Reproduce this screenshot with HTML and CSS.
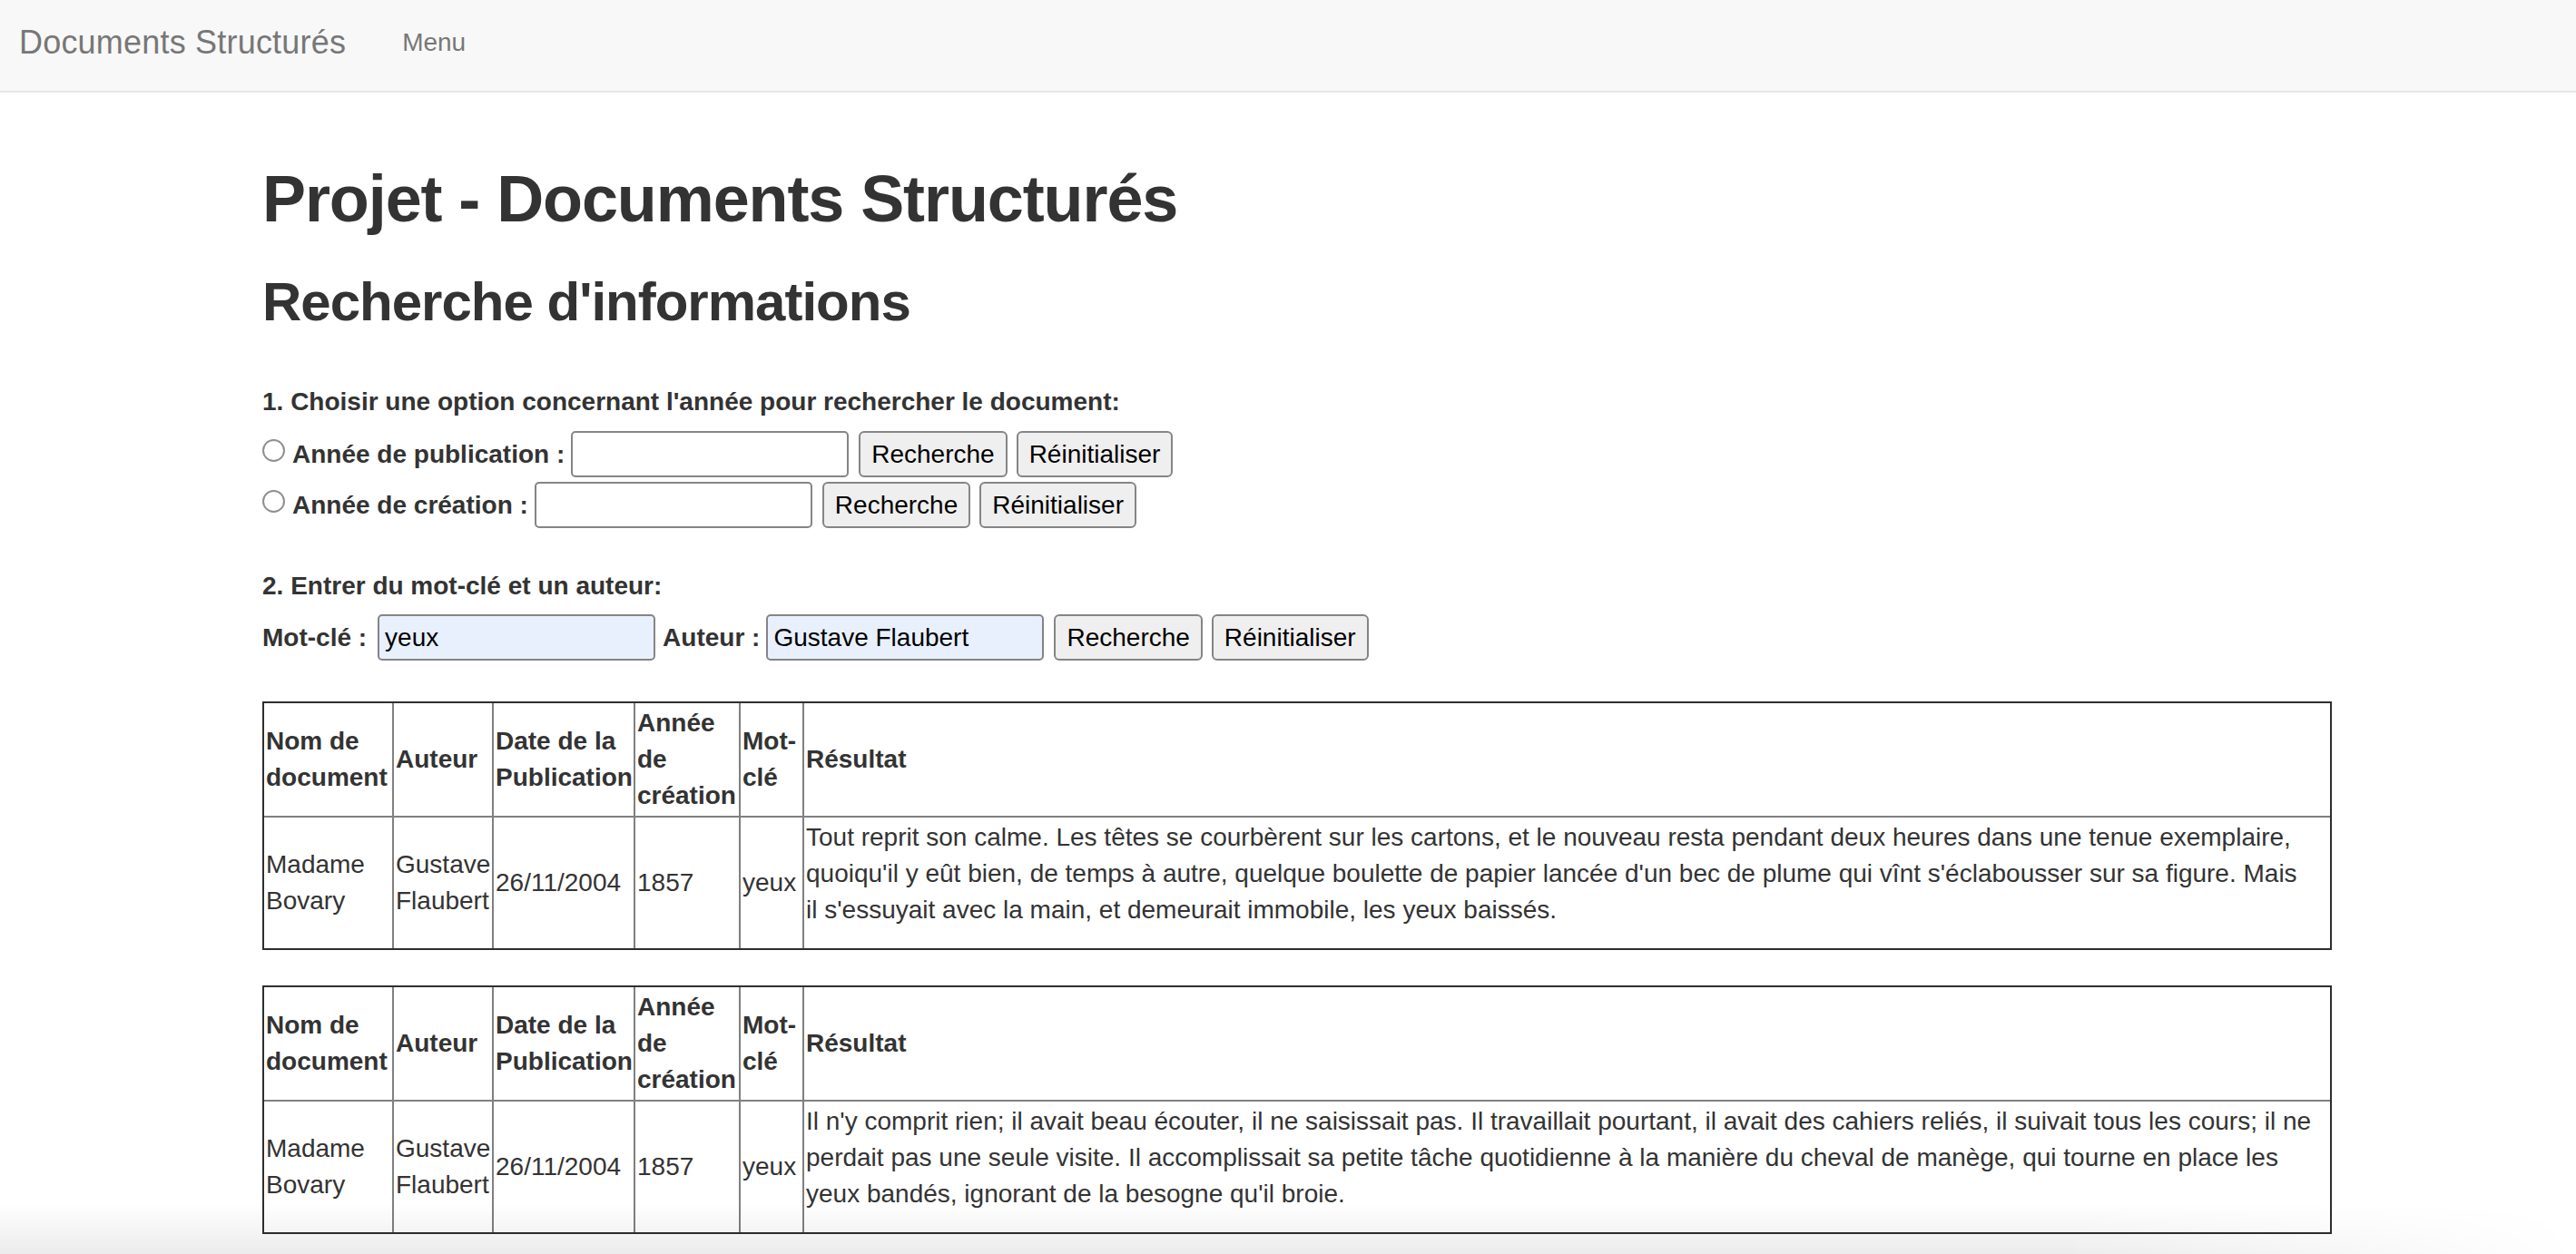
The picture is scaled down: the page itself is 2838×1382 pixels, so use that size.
FILE: index.html
```html
<!DOCTYPE html>
<html lang="fr">
<head>
<meta charset="utf-8">
<title>Projet - Documents Structurés</title>
<link rel="stylesheet" href="styles.css">
</head>
<body>
<nav class="navbar">
  <a class="brand" href="#">Documents Structurés</a>
  <a class="nav-link" href="#">Menu</a>
</nav>
<main class="container">
  <h1 class="title">Projet - Documents Structurés</h1>
  <h2 class="subtitle">Recherche d'informations</h2>
  <form class="search">
    <p class="step step-one">1. Choisir une option concernant l'année pour rechercher le document:</p>
    <div class="row row-one">
      <input type="radio" class="radio" name="annee">
      <label class="lbl">Année de publication :</label>
      <input type="text" class="field">
      <button type="button" class="btn">Recherche</button>
      <button type="button" class="btn">Réinitialiser</button>
    </div>
    <div class="row row-two">
      <input type="radio" class="radio" name="annee">
      <label class="lbl">Année de création :</label>
      <input type="text" class="field">
      <button type="button" class="btn">Recherche</button>
      <button type="button" class="btn">Réinitialiser</button>
    </div>
    <p class="step step-two">2. Entrer du mot-clé et un auteur:</p>
    <div class="row row-three">
      <label class="lbl">Mot-clé :</label>
      <input type="text" class="field filled field-kw" value="yeux">
      <label class="lbl">Auteur :</label>
      <input type="text" class="field filled" value="Gustave Flaubert">
      <button type="button" class="btn">Recherche</button>
      <button type="button" class="btn">Réinitialiser</button>
    </div>
  </form>

  <table class="results first">
    <thead>
      <tr>
        <th class="c-nom">Nom de document</th>
        <th class="c-aut">Auteur</th>
        <th class="c-date">Date de la Publication</th>
        <th class="c-annee">Année de création</th>
        <th class="c-mot">Mot-clé</th>
        <th class="c-res">Résultat</th>
      </tr>
    </thead>
    <tbody>
      <tr>
        <td>Madame Bovary</td>
        <td>Gustave Flaubert</td>
        <td>26/11/2004</td>
        <td>1857</td>
        <td>yeux</td>
        <td><p class="extrait">Tout reprit son calme. Les têtes se courbèrent sur les cartons, et le nouveau resta pendant deux heures dans une tenue exemplaire, quoiqu'il y eût bien, de temps à autre, quelque boulette de papier lancée d'un bec de plume qui vînt s'éclabousser sur sa figure. Mais il&nbsp;s'essuyait avec la main, et demeurait immobile, les yeux baissés.</p></td>
      </tr>
    </tbody>
  </table>

  <table class="results second">
    <thead>
      <tr>
        <th class="c-nom">Nom de document</th>
        <th class="c-aut">Auteur</th>
        <th class="c-date">Date de la Publication</th>
        <th class="c-annee">Année de création</th>
        <th class="c-mot">Mot-clé</th>
        <th class="c-res">Résultat</th>
      </tr>
    </thead>
    <tbody>
      <tr>
        <td>Madame Bovary</td>
        <td>Gustave Flaubert</td>
        <td>26/11/2004</td>
        <td>1857</td>
        <td>yeux</td>
        <td><p class="extrait">Il n'y comprit rien; il avait beau écouter, il ne saisissait pas. Il travaillait pourtant, il avait des cahiers reliés, il suivait tous les cours; il ne perdait pas une seule visite. Il accomplissait sa petite tâche quotidienne à la manière du cheval de manège, qui tourne en place les yeux bandés, ignorant de la besogne qu'il broie.</p></td>
      </tr>
    </tbody>
  </table>
</main>
<div class="bottom-shade"></div>
</body>
</html>
```

FILE: styles.css
```css
* {
  box-sizing: border-box;
}

html, body {
  margin: 0;
  padding: 0;
  background: #ffffff;
}

body {
  font-family: "Liberation Sans", Arial, Helvetica, sans-serif;
  font-size: 28px;
  line-height: 40px;
  color: #333333;
  min-height: 1382px;
}

/* ---------- navbar ---------- */
.navbar {
  display: flex;
  align-items: flex-start;
  height: 102px;
  background: #f8f8f8;
  border-bottom: 2px solid #e7e7e7;
}

.brand {
  display: block;
  padding: 27px 30px 33px 21px;
  font-size: 36px;
  line-height: 40px;
  color: #777777;
  text-decoration: none;
  letter-spacing: 0.2px;
}

.nav-link {
  display: block;
  padding: 27px 30px 33px 32px;
  font-size: 28px;
  line-height: 40px;
  color: #777777;
  text-decoration: none;
}

/* ---------- content ---------- */
.container {
  display: flow-root;
  width: 2280px;
  margin-left: 289px;
  padding-top: 78px;
}

.title {
  margin: 0;
  font-size: 72px;
  line-height: 79px;
  font-weight: bold;
  letter-spacing: -1.1px;
  color: #333333;
}

.subtitle {
  margin: 41px 0 0;
  font-size: 60px;
  line-height: 66px;
  font-weight: bold;
  letter-spacing: -1px;
  color: #333333;
}

.search {
  margin: 0;
}

.step {
  margin: 0;
  font-weight: bold;
  line-height: 40px;
}

.step-one {
  margin-top: 57px;
}

.step-two {
  margin-top: 44px;
}

.row {
  display: flex;
  align-items: center;
  height: 51px;
}

.row-one {
  margin-top: 12px;
}

.row-two {
  margin-top: 5px;
}

.row-three {
  margin-top: 11px;
}

.row > * + * {
  margin-left: 11px;
}

.row > .radio + .lbl {
  margin-left: 8px;
}

.row > .lbl + .field {
  margin-left: 7px;
}

.row > .lbl + .field-kw {
  margin-left: 12px;
}

.row > .field + .lbl {
  margin-left: 8px;
}

.row > .btn + .btn {
  margin-left: 10px;
}

.radio {
  -webkit-appearance: none;
  appearance: none;
  width: 25px;
  height: 25px;
  margin: 0 0 8px 0;
  border: 2px solid #8f8f8f;
  border-radius: 50%;
  background: #ffffff;
  flex: none;
}

.lbl {
  font-weight: bold;
  white-space: nowrap;
  color: #333333;
}

.field {
  width: 306px;
  height: 51px;
  padding: 0 6px;
  border: 2px solid #858585;
  border-radius: 5px;
  background: #ffffff;
  font-family: "Liberation Sans", Arial, Helvetica, sans-serif;
  font-size: 28px;
  color: #000000;
  flex: none;
}

.field.filled {
  background: #e8f0fe;
}

.btn {
  height: 51px;
  padding: 0 12px;
  border: 2px solid #858585;
  border-radius: 6px;
  background: #efefef;
  font-family: "Liberation Sans", Arial, Helvetica, sans-serif;
  font-size: 28px;
  line-height: 40px;
  color: #000000;
  flex: none;
}

/* ---------- tables ---------- */
.results {
  width: 2280px;
  table-layout: fixed;
  border-collapse: separate;
  border-spacing: 0;
  border: 2px solid #2e2e2e;
}

.results.first {
  margin-top: 45px;
}

.results.second {
  margin-top: 39px;
}

.results th,
.results td {
  padding: 2px;
  text-align: left;
  vertical-align: middle;
  border-right: 2px solid #808080;
  border-bottom: 2px solid #808080;
  line-height: 40px;
  color: #333333;
}

.results th {
  font-weight: bold;
}

.results th:last-child,
.results td:last-child {
  border-right: none;
}

.results tbody tr:last-child td {
  border-bottom: none;
}

.c-nom { width: 143px; }
.c-aut { width: 110px; }
.c-date { width: 156px; }
.c-annee { width: 116px; }
.c-mot { width: 70px; }
.c-res { width: auto; }

.extrait {
  margin: 0 0 20px;
}

/* window shadow at the bottom of the capture */
.bottom-shade {
  position: fixed;
  left: 0;
  right: 0;
  bottom: 0;
  height: 56px;
  pointer-events: none;
  background: linear-gradient(to bottom, rgba(0, 0, 0, 0), rgba(0, 0, 0, 0.075));
  -webkit-mask-image: linear-gradient(to right, #000 0%, #000 80%, rgba(0,0,0,0) 100%);
  mask-image: linear-gradient(to right, #000 0%, #000 80%, rgba(0,0,0,0) 100%);
}
```
